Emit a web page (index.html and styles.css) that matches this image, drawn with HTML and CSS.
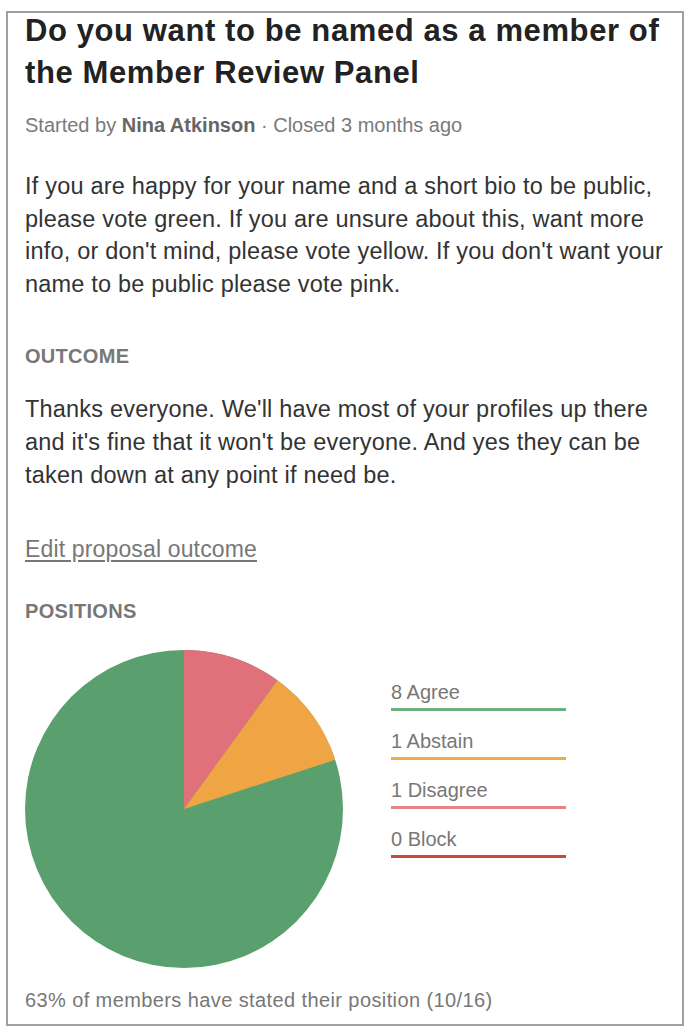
FILE: index.html
```html
<!DOCTYPE html>
<html>
<head>
<meta charset="utf-8">
<link rel="stylesheet" href="styles.css">
</head>
<body>
<div class="card">
  <h1 class="title">Do you want to be named as a member of the Member Review Panel</h1>
  <div class="meta">Started by <strong>Nina Atkinson</strong> · Closed 3 months ago</div>
  <p class="body-text first">If you are happy for your name and a short bio to be public, please vote green. If you are unsure about this, want more info, or don't mind, please vote yellow. If you don't want your name to be public please vote pink.</p>
  <h2 class="section outcome">OUTCOME</h2>
  <p class="body-text second">Thanks everyone. We'll have most of your profiles up there and it's fine that it won't be everyone. And yes they can be taken down at any point if need be.</p>
  <a class="edit-link" href="#">Edit proposal outcome</a>
  <h2 class="section positions">POSITIONS</h2>
  <div class="chart-row">
    <svg class="pie" width="318" height="318" viewBox="-159 -159 318 318">
      <circle cx="0" cy="0" r="159" fill="#5aa06e"/>
      <path d="M0 0 L0 -159 A159 159 0 0 1 93.46 -128.63 Z" fill="#e0707a"/>
      <path d="M0 0 L93.46 -128.63 A159 159 0 0 1 151.22 -49.13 Z" fill="#f0a545"/>
    </svg>
    <ul class="legend">
      <li class="agree">8 Agree</li>
      <li class="abstain">1 Abstain</li>
      <li class="disagree">1 Disagree</li>
      <li class="block">0 Block</li>
    </ul>
  </div>
  <div class="footer">63% of members have stated their position (10/16)</div>
</div>
</body>
</html>
```
FILE: styles.css
```css
html, body {
  margin: 0;
  padding: 0;
  background: #fff;
}
body {
  font-family: "Liberation Sans", Arial, sans-serif;
  color: #333;
}
.card {
  margin: 11px 6px 0 6px;
  width: 678px;
  height: 1015px;
  box-sizing: border-box;
  border: 2px solid #a0a0a0;
  padding: 0 2px 0 17px;
}
.title {
  margin: -3px 0 0 0;
  font-size: 31px;
  line-height: 42px;
  font-weight: bold;
  color: #222;
  letter-spacing: 0.6px;
}
.meta {
  margin-top: 19px;
  font-size: 20px;
  line-height: 24px;
  color: #7a7a7a;
}
.meta strong {
  color: #666;
}
.body-text {
  margin: 0;
  font-size: 23.5px;
  line-height: 32.7px;
  color: #333;
  letter-spacing: 0.2px;
}
.body-text.first {
  margin-top: 33px;
}
.body-text.second {
  margin-top: 25.5px;
}
.section {
  margin: 0;
  font-size: 20px;
  line-height: 24px;
  font-weight: bold;
  color: #777;
  letter-spacing: 0.3px;
}
.outcome {
  margin-top: 43px;
}
.edit-link {
  display: block;
  margin-top: 43px;
  font-size: 23px;
  line-height: 30px;
  color: #777;
  letter-spacing: 0.15px;
  text-decoration: underline;
  text-underline-offset: 3px;
  width: max-content;
}
.positions {
  margin-top: 35px;
}
.chart-row {
  display: flex;
  align-items: flex-start;
  margin-top: 27px;
}
.pie {
  display: block;
  flex: none;
}
.legend {
  list-style: none;
  margin: 30px 0 0 48px;
  padding: 0;
  width: 175px;
}
.legend li {
  font-size: 20px;
  line-height: 24px;
  color: #777;
  padding-bottom: 3.5px;
  border-bottom: 3px solid;
  margin-bottom: 18.5px;
}
.legend .agree { border-color: #6cb07f; }
.legend .abstain { border-color: #f3a93f; }
.legend .disagree { border-color: #e5838a; }
.legend .block { border-color: #c9483a; }
.footer {
  margin-top: 20px;
  font-size: 20px;
  line-height: 24px;
  color: #777;
  letter-spacing: 0.4px;
}
```
